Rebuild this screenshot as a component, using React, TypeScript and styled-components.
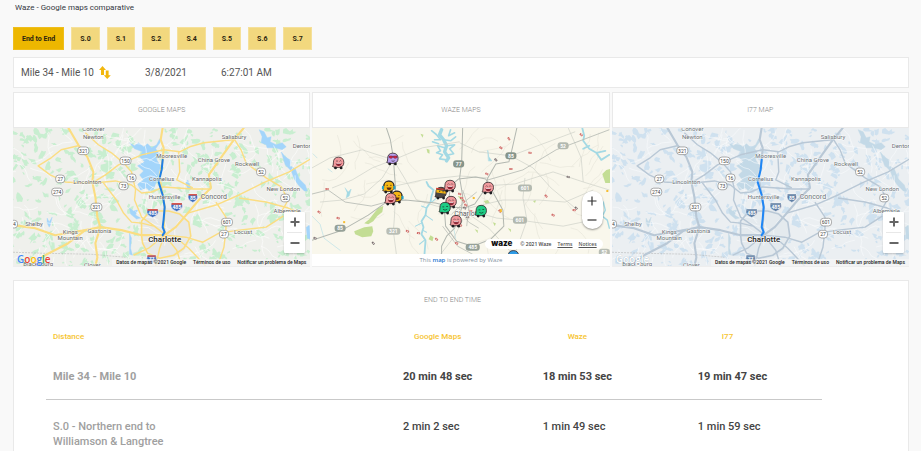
import React from 'react';
import styled, { createGlobalStyle, css } from 'styled-components';

const GlobalStyle = createGlobalStyle`
  * { box-sizing: border-box; }
  body {
    margin: 0;
    background: #f9f9f9;
    color: #444;
    font-family: Roboto, 'Liberation Sans', sans-serif;
  }
  button { font-family: inherit; cursor: pointer; }
`;

/* ---------- page layout ---------- */

const Page = styled.main`
  display: flex;
  flex-direction: column;
  min-height: 100vh;
  padding: 0 12px 0 13px;
`;

const PageTitle = styled.h1`
  margin: 0;
  padding: 2px 2px 0;
  height: 27px;
  font-size: 8px;
  line-height: 12px;
  font-weight: 400;
  color: #33383f;
`;

const Segments = styled.nav`
  display: flex;
  flex-wrap: wrap;
  gap: 7px;
  margin-bottom: 7px;
`;

const SegmentButton = styled.button<{ $active?: boolean }>`
  height: 23px;
  padding: 0 8px;
  border: 1px solid ${(p) => (p.$active ? '#efbe1c' : '#f5e09a')};
  background: ${(p) => (p.$active ? '#edb700' : '#f2d87e')};
  color: #2b2410;
  font-size: 7px;
  font-weight: 700;
`;

const panel = css`
  background: #fff;
  border: 1px solid #e9e9e9;
`;

const StatusBar = styled.section`
  ${panel}
  display: flex;
  align-items: center;
  height: 31px;
  margin: 0 0 4px;
  padding: 0 7px;
  font-size: 10px;
  color: #555;
`;

const Direction = styled.div`
  display: flex;
  align-items: center;
  gap: 5px;
  width: 124px;
`;

const SwapButton = styled.button`
  display: flex;
  padding: 0;
  border: 0;
  background: none;
`;

const DateCell = styled.time`
  width: 76px;
`;

const Maps = styled.section`
  display: grid;
  grid-template-columns: 1fr 1fr 1fr;
  gap: 2px;
`;

const MapCard = styled.article`
  display: flex;
  flex-direction: column;
  min-width: 0;
  border-bottom: 1px solid #eee;
`;

const MapHeading = styled.h2`
  ${panel}
  display: flex;
  align-items: center;
  justify-content: center;
  height: 36px;
  margin: 0;
  font-size: 7px;
  font-weight: 300;
  color: #888;
`;

const MapView = styled.div<{ $height: number }>`
  position: relative;
  overflow: hidden;
  height: ${(p) => p.$height}px;
  svg.canvas { display: block; width: 100%; height: 100%; }
`;

/* ---------- map overlays ---------- */

const ZoomBox = styled.div<{ $round?: boolean }>`
  position: absolute;
  right: ${(p) => (p.$round ? 7 : 5)}px;
  bottom: ${(p) => (p.$round ? 25 : 13)}px;
  display: flex;
  flex-direction: column;
  width: 21px;
  height: ${(p) => (p.$round ? 38 : 41)}px;
  padding: 0 ${(p) => (p.$round ? 0 : 3)}px;
  border-radius: ${(p) => (p.$round ? 11 : 1)}px;
  background: #fff;
  box-shadow: 0 1px 2px rgba(0, 0, 0, ${(p) => (p.$round ? 0.4 : 0.2)});
`;

const ZoomButton = styled.button<{ $divided?: boolean }>`
  flex: 1;
  display: flex;
  align-items: center;
  justify-content: center;
  padding: 0;
  border: 0;
  border-bottom: ${(p) => (p.$divided ? '1px solid #e8e8e8' : '0')};
  background: none;
`;

const GoogleMark = styled.a<{ $white?: boolean }>`
  position: absolute;
  left: 4px;
  bottom: 0;
  font: 600 10px/14px 'Open Sans', sans-serif;
  color: ${(p) => (p.$white ? '#fff' : '#4285f4')};
  text-shadow: 0 0 1px ${(p) => (p.$white ? '#8fa3b5' : '#fff')};
  text-decoration: none;
`;

const Tone = styled.span<{ $color?: string }>`
  color: ${(p) => p.$color || 'inherit'};
`;

const Credits = styled.div`
  position: absolute;
  right: 0;
  bottom: 0;
  display: flex;
  justify-content: flex-end;
  gap: 7px;
  padding: 0 4px;
  background: rgba(245, 245, 245, 0.75);
  font-size: 5px;
  line-height: 7px;
  font-weight: 500;
  color: #222;
  white-space: nowrap;
  a { color: inherit; text-decoration: none; }
`;

const WazeCredits = styled.div`
  position: absolute;
  right: 7px;
  bottom: 5px;
  display: flex;
  align-items: center;
  gap: 6px;
  height: 10px;
  padding: 0 6px;
  border-radius: 5px;
  background: #fff;
  font: 600 5px/10px 'Open Sans', sans-serif;
  color: #444;
  a { color: #555; }
`;

const WazeMark = styled.strong`
  font: 900 8px/8px Inter, sans-serif;
  color: #111;
  margin: 0 2px 2px 0;
`;

const PoweredBy = styled.p`
  margin: 0;
  height: 12px;
  background: #fff;
  font: 400 6px/12px 'Open Sans', sans-serif;
  text-align: center;
  color: #8494a3;
  a { color: #1f78d1; text-decoration: none; font-weight: 600; }
`;

/* ---------- times table ---------- */

const TimesPanel = styled.section`
  ${panel}
  flex: 1;
  margin: 13px 0 0;
  border-bottom: 0;
`;

const TimesHeading = styled.h2`
  margin: 0;
  padding-top: 13px;
  padding-right: 17px;
  font-size: 7px;
  line-height: 12px;
  font-weight: 300;
  text-align: center;
  color: #888;
`;

const TimesTable = styled.table`
  width: calc(100% - 118px);
  margin: 25px 0 0 32px;
  table-layout: fixed;
  border-collapse: collapse;
  text-align: left;
`;

const HeadCell = styled.th<{ $width?: number; $inset: number }>`
  width: ${(p) => (p.$width ? `${p.$width}%` : 'auto')};
  padding: 0 0 0 ${(p) => p.$inset}px;
  font-size: 8px;
  line-height: 12px;
  font-weight: 500;
  color: #f6c431;
`;

const Row = styled.tr<{ $total?: boolean }>`
  font-size: 11px;
  line-height: 15px;
  font-weight: ${(p) => (p.$total ? 700 : 500)};
  border-bottom: ${(p) => (p.$total ? '1px solid #c9c9c9' : '0')};
`;

const NameCell = styled.th`
  padding: 26px 220px 15px 7px;
  font-weight: inherit;
  color: #a0a0a0;
  vertical-align: top;
  ${Row}:last-child & { padding: 19px 220px 0 7px; }
`;

const TimeCell = styled.td`
  padding: 26px 0 15px;
  vertical-align: top;
  ${Row}:last-child & { padding: 19px 0 0; }
`;

/* ---------- map data ---------- */

type Pt = [number, number];

const line = (pts: Pt[]) => 'M' + pts.map((p) => p.join(',')).join('L');

function seeded(seed: number) {
  let s = seed;
  return () => {
    s = (s * 16807) % 2147483647;
    return s / 2147483647;
  };
}

function scatterPatches(seed: number, count: number) {
  const rnd = seeded(seed);
  let d = '';
  for (let i = 0; i < count; i++) {
    const cx = rnd() * 310 - 5;
    const cy = rnd() * 140;
    const size = 1.5 + rnd() * 4;
    const inCity = Math.hypot(cx - 152, cy - 104) < 26;
    const pts: Pt[] = [];
    const n = 9;
    const tilt = rnd() * 3;
    for (let k = 0; k < n; k++) {
      const a = (k / n) * Math.PI * 2;
      const r = size * (0.3 + rnd() * 0.9);
      const x = Math.cos(a) * r * 0.65;
      const y = Math.sin(a) * r * 1.2;
      pts.push([
        +(cx + x * Math.cos(tilt) - y * Math.sin(tilt)).toFixed(1),
        +(cy + x * Math.sin(tilt) + y * Math.cos(tilt)).toFixed(1),
      ]);
    }
    if (!inCity) d += line(pts) + 'Z';
  }
  return d;
}

function scatterStreets(seed: number, count: number, step: number) {
  const rnd = seeded(seed);
  let d = '';
  for (let i = 0; i < count; i++) {
    let x = rnd() * 300;
    let y = rnd() * 138;
    let a = rnd() * 6.28;
    const pts: Pt[] = [];
    for (let k = 0; k < 6; k++) {
      pts.push([+x.toFixed(1), +y.toFixed(1)]);
      a += (rnd() - 0.5) * 1.1;
      x += Math.cos(a) * step;
      y += Math.sin(a) * step;
    }
    d += line(pts);
  }
  return d;
}

const PATCHES = scatterPatches(77, 520);
const STREETS = scatterStreets(1234, 150, 5);
const LANES = scatterStreets(4321, 60, 7);

const HIGHWAYS = [
  'M55,0L65,17L74,29L80,44L79,54L82,69L84,89L87,99L82,115L84,129L82,138',
  'M72,5L85,17L98,25L110,35L118,44L122,62L121,72L128,89L138,96L151,106',
  'M65,18L48,22L38,30L25,38L37,47L52,54L67,55L79,55L92,47L105,37L112,34L128,27L150,22L166,24L176,19L190,15L219,12',
  'M80,55L102,53L118,57L128,65L138,64L150,59L164,60L180,61L197,61',
  'M90,55L103,72L110,85L118,94L128,95L140,98',
  'M0,97L22,100L42,107L72,102L87,99L108,102L128,107L151,107',
  'M72,102L55,115L32,127L15,138',
  'M149,0L147,12L150,20L149,32L146,50L149,67L151,79L150,99L151,107',
  'M151,107L162,99L174,85L185,72L197,60L195,47L209,27L220,12L230,0',
  'M220,11L227,22L232,35L252,50L267,59L274,72L267,84',
  'M165,24L166,44L163,52L179,60',
  'M174,85L202,77L225,67L249,55L275,44L298,30',
  'M225,70L252,74L274,80L284,84',
  'M202,74L212,89L212,102L210,119L205,134',
  'M151,107L172,109L189,114L205,105L225,102L252,99L269,88',
  'M162,109L175,120L192,138',
  'M151,107L163,122L168,138',
  'M151,107L146,120L142,138',
  'M151,107L135,120L120,127',
];
const MAJOR = [0, 5, 6, 7, 8];
const LOOP =
  'M128,107L128,93L134,86L142,83L155,83L166,86L175,94L177,108L170,120L160,127L146,130L134,125L129,115Z';

const LAKES = [
  'M116,15L121,18L125,15L130,19L134,16L138,20L143,17L146,11L147,14L142,21L146,26L143,32L147,38L145,46L143,53L140,61L136,63L133,60L127,62L124,56L130,52L126,47L130,43L124,38L131,34L126,29L129,24L121,21Z',
  'M245,2L250,4L253,10L257,9L256,14L262,17L268,15L272,19L268,22L261,20L253,20L252,17L247,15L248,9Z',
  'M267,24L271,29L277,33L276,38L281,41L285,51L291,57L293,63L290,63L284,57L280,51L277,43L271,37Z',
  'M34,90L36,94L39,89L37,97L36,99L34,95Z',
  'M116,80L120,83L124,82L122,87L127,90L123,91L117,86Z',
  'M116,105L118,110L117,120L119,127L116,126L116,114Z',
  'M172,55L174,52L177,60L174,61Z',
  'M292,99L295,97L296,111L293,110Z',
];

type Label = { t: string; x: number; y: number; s?: number; bold?: boolean };
const LABELS: Label[] = [
  { t: 'Conover', x: 80, y: 1 },
  { t: 'Newton', x: 80, y: 9 },
  { t: 'Lincolnton', x: 74, y: 54 },
  { t: 'Shelby', x: 21, y: 96 },
  { t: 'Kings', x: 57, y: 104 },
  { t: 'Mountain', x: 57, y: 110 },
  { t: 'Gastonia', x: 86, y: 103 },
  { t: 'Blacksburg', x: 25, y: 136 },
  { t: 'Clover', x: 79, y: 137 },
  { t: 'Mooresville', x: 158, y: 28 },
  { t: 'Cornelius', x: 148, y: 51 },
  { t: 'Huntersville', x: 151, y: 69 },
  { t: 'Salisbury', x: 220, y: 9 },
  { t: 'Denton', x: 288, y: 18 },
  { t: 'China Grove', x: 200, y: 32 },
  { t: 'Rockwell', x: 233, y: 36 },
  { t: 'Kannapolis', x: 193, y: 51 },
  { t: 'Concord', x: 200, y: 69, s: 7 },
  { t: 'New London', x: 269, y: 61 },
  { t: 'Albemarle', x: 273, y: 83 },
  { t: 'Locust', x: 229, y: 104 },
  { t: 'Charlotte', x: 151, y: 111, s: 8, bold: true },
];

const SHIELDS: [string, number, number][] = [
  ['321', 70, 23], ['150', 112, 33], ['27', 47, 51], ['16', 118, 50], ['73', 110, 58],
  ['274', 44, 64], ['321', 83, 79], ['74', 0, 96], ['52', 247, 44], ['52', 271, 70],
  ['601', 213, 94], ['27', 210, 106],
];

const INTERSTATES: [string, number, number][] = [
  ['485', 139, 85], ['85', 179, 70], ['485', 163, 79], ['77', 138, 131],
];

const MAP_THEMES = {
  street: {
    land: '#eff0ec', city: '#e6e7e6', patch: '#c8eed0', lane: '#ffffff', road: '#fbdd82',
    water: '#a3d5fb', text: '#666', crest: '#3f6fc0', crown: '#d8564c', route: '#1f7fe5',
  },
  steel: {
    land: '#ebeff2', city: '#e2e8ec', patch: '#cfe1ef', lane: '#fafcfd', road: '#b9c8d6',
    water: '#c3d9e7', text: '#6c7277', crest: '#5f7fa6', crown: '#7f98b4', route: '#1f86f5',
  },
};

function RoadMap({ theme, title }: { theme: keyof typeof MAP_THEMES; title: string }) {
  const c = MAP_THEMES[theme];
  return (
    <svg className="canvas" viewBox="0 0 296 138" preserveAspectRatio="xMidYMid slice" role="img" aria-label={title}>
      <rect x="-20" y="-20" width="340" height="180" fill={c.land} />
      <path d={PATCHES} fill={c.patch} />
      <circle cx="152" cy="105" r="25" fill={c.city} opacity="0.8" />
      {LAKES.map((d) => (
        <path key={d} d={d} fill={c.water} stroke={c.water} strokeWidth="0.4" strokeLinejoin="round" />
      ))}
      <path d={STREETS} fill="none" stroke={c.lane} strokeWidth="0.7" opacity="0.8" />
      <path d="M0,124L30,125L78,126L112,129" fill="none" stroke="#aaa" strokeWidth="0.5" strokeDasharray="2 1" />
      <g fill="none" stroke={c.road} strokeLinejoin="round">
        {HIGHWAYS.map((d, i) => (
          <path key={d} d={d} strokeWidth={MAJOR.includes(i) ? 2.1 : 1.4} />
        ))}
        <path d={LOOP} strokeWidth="1.6" />
      </g>
      <path
        d="M149,32L148,42L145,54L149,67L151,79L150,91L149,99L151,104L149,107"
        fill="none" stroke={c.route} strokeWidth="2" strokeLinejoin="round" strokeLinecap="round"
      />
      {SHIELDS.map(([t, x, y]) => (
        <g key={`${t}${x}${y}`}>
          <rect x={x - (t.length > 2 ? 5.5 : 4.5)} y={y - 3.8} width={t.length > 2 ? 11 : 9} height="7.6" rx="3" fill="#fff" stroke="#777" strokeWidth="0.6" />
          <text x={x} y={y + 1.8} fontSize="5" textAnchor="middle" fill="#444">{t}</text>
        </g>
      ))}
      {INTERSTATES.map(([t, x, y]) => {
        const h = t.length > 2 ? 5 : 4;
        return (
          <g key={`${t}${x}`}>
            <path d={`M${x - h},${y - 4}h${h * 2}l.8,3q0,3.4,${-h - 0.8},5.4q${-h - 0.8},-2,${-h - 0.8},-5.4z`} fill={c.crest} stroke="#fff" strokeWidth="0.5" />
            <path d={`M${x - h},${y - 4}h${h * 2}l.4,1.6h${-h * 2 - 0.8}z`} fill={c.crown} />
            <text x={x} y={y + 2.2} fontSize="5" fontWeight="700" textAnchor="middle" fill="#fff">{t}</text>
          </g>
        );
      })}
      <g textAnchor="middle" stroke="#fff" strokeWidth="1" strokeOpacity="0.8" paintOrder="stroke" strokeLinejoin="round">
        {LABELS.map((l) => (
          <text key={l.t} x={l.x} y={l.y + (l.s || 6) * 0.35} fontSize={l.s || 6} fontWeight={l.bold ? 500 : 400} fill={l.bold ? '#222' : c.text}>
            {l.t}
          </text>
        ))}
      </g>
    </svg>
  );
}

type Mood = 'laugh' | 'cool' | 'headphones' | 'ninja' | 'calm';
const WAZERS: { x: number; y: number; color: string; mood: Mood }[] = [
  { x: 26, y: 35, color: '#f19a9d', mood: 'laugh' },
  { x: 80, y: 31, color: '#b9a0ee', mood: 'cool' },
  { x: 76, y: 59, color: '#f5b614', mood: 'headphones' },
  { x: 84, y: 69, color: '#f5b614', mood: 'headphones' },
  { x: 78, y: 71, color: '#f19a9d', mood: 'laugh' },
  { x: 128, y: 65, color: '#4a4744', mood: 'ninja' },
  { x: 137, y: 58, color: '#f19a9d', mood: 'laugh' },
  { x: 138, y: 74, color: '#f19a9d', mood: 'laugh' },
  { x: 132, y: 80, color: '#1fce86', mood: 'calm' },
  { x: 143, y: 93, color: '#f19a9d', mood: 'laugh' },
  { x: 175, y: 60, color: '#f19a9d', mood: 'laugh' },
  { x: 168, y: 83, color: '#1fce86', mood: 'calm' },
  { x: 200, y: 128, color: '#2e9be6', mood: 'calm' },
];

function Wazer({ x, y, color, mood }: (typeof WAZERS)[number]) {
  return (
    <g transform={`translate(${x} ${y})`}>
      <path d="M-5.6,3.6Q-4.6,2.6,-4.7,0Q-4.8,-5.6,0.4,-5.7Q5.6,-5.6,5.7,-0.4Q5.6,4.4,0.6,4.6Q-3.6,5,-5.6,3.6Z" fill={color} stroke="#33272a" strokeWidth="0.8" />
      <circle cx="-2.6" cy="5" r="1.4" fill="#1d1d20" />
      <circle cx="3" cy="5" r="1.4" fill="#1d1d20" />
      {mood === 'laugh' && (
        <>
          <path d="M-2.4,.2h5.8q-.3,3,-2.9,3q-2.6,0,-2.9,-3z" fill="#8a2433" />
          <path d="M-1.8,.5h4.6" stroke="#fff" strokeWidth="0.7" />
          <path d="M-2,-1.4l.9,-.9l.9,.9M1.4,-1.4l.9,-.9l.9,.9" fill="none" stroke="#33272a" strokeWidth="0.6" />
        </>
      )}
      {mood === 'cool' && (
        <>
          <path d="M-3.2,-2.8h3.4v1.2q0,1,-1.6,1q-1.8,0,-1.8,-1.2zM1,-2.8h3.6v1.2q0,1,-1.7,1q-1.9,0,-1.9,-1.2z" fill="#d92c4a" stroke="#5a1030" strokeWidth="0.5" />
          <path d="M-.8,2q1.6,1,3,-.2" fill="none" stroke="#33272a" strokeWidth="0.7" />
        </>
      )}
      {mood === 'headphones' && (
        <>
          <path d="M-4.4,-1q0,-5,5,-5t5,5" fill="none" stroke="#222" strokeWidth="0.9" />
          <rect x="-6.4" y="-1.2" width="2.2" height="3.6" rx="1" fill="#2a9fc4" />
          <rect x="5" y="-1.2" width="2.2" height="3.6" rx="1" fill="#2a9fc4" />
          <path d="M-1.8,.4h5q-.3,2.6,-2.5,2.6t-2.5,-2.6z" fill="#5b2a12" />
          <path d="M-1.8,-1.6h1.4M1.8,-1.6h1.4" stroke="#33272a" strokeWidth="0.7" />
        </>
      )}
      {mood === 'ninja' && (
        <>
          <path d="M-4.2,-3.4L5,-1.6L5.2,.8L-4.2,-.6z" fill="#f5b614" />
          <path d="M-4.4,-4.6L4.6,-3.4" stroke="#d33b32" strokeWidth="1.2" />
          <path d="M-1.4,-1.8h1M2,-1.2h1" stroke="#222" strokeWidth="1" />
        </>
      )}
      {mood === 'calm' && (
        <>
          <path d="M-2.2,-1.2h1.8M1.6,-1.6h1.8" stroke="#123b2a" strokeWidth="0.7" />
          <path d="M-1.6,1.2q2,1.8,4.2,0" fill="none" stroke="#123b2a" strokeWidth="0.7" />
        </>
      )}
    </g>
  );
}

const BADGES: [string, number, number, string][] = [
  ['77', 146, 36, '#87958b'], ['85', 198, 28, '#87958b'], ['52', 250, 18, '#b3b9b0'],
  ['601', 212, 60, '#b3b9b0'], ['601', 207, 92, '#b3b9b0'], ['485', 160, 119, '#96a198'],
  ['85', 28, 100, '#96a198'], ['321', 81, 103, '#b9beb5'], ['52', 291, 124, '#b9beb5'],
];

const REPORTS: Pt[] = [
  [15, 61], [7, 84], [26, 90], [61, 115], [95, 103], [106, 105], [124, 111], [3, 110],
  [196, 11], [188, 20], [217, 25], [183, 32], [174, 46], [198, 41], [268, 7], [255, 49],
  [233, 68], [240, 87], [261, 82], [263, 80], [147, 66], [151, 73], [153, 77], [155, 89],
  [187, 83], [144, 115], [149, 70], [152, 80], [158, 83], [148, 97],
];

function WazeMap() {
  return (
    <svg className="canvas" viewBox="0 0 296 126" preserveAspectRatio="xMidYMid slice" role="img" aria-label="Waze live map">
      <rect x="-20" y="-20" width="340" height="180" fill="#f9f7ec" />
      <path d={LANES} fill="none" stroke="#e6e5d9" strokeWidth="0.6" />
      <g fill="#c3dd94">
        <path d="M42,103L52,99L60,98L61,103L59,108L50,109L43,106Z" />
        <path d="M52,95L57,91L61,86L66,80L71,78L70,84L65,88L61,93L56,96Z" />
        <path d="M114,21l3,1v4l-2,-1z" />
        <path d="M289,46l4,-4l4,-1v14l-5,0z" />
        <path d="M134,52l2,1l2,4l-4,-1zM171,73l4,-1l2,3l-4,1zM118,107l3,2l-1,4l-4,-2zM220,73l3,-1l-1,3z" />
        <path d="M180,94l3,1l-1,3zM162,101l3,1v3zM195,100l3,1v3zM108,6l3,1l-1,3zM145,68l5,1l-1,4z" />
      </g>
      <g fill="none" stroke="#a3d9e4" strokeLinejoin="round" strokeLinecap="round">
        <path d="M129,2L127,7L131,12L134,18L132,24L136,30L134,33" strokeWidth="3.4" />
        <path d="M119,3L124,7L128,12L122,12M138,2L136,8L142,5M131,12L138,13L143,9M134,18L142,17L137,21L141,26L136,27M132,20L125,18L128,23L124,25L130,27L127,31L134,32M126,16L120,14" strokeWidth="1.6" />
        <path d="M114,54L116,58L121,62L119,68L118,74L114,80L113,87L109,93L111,99L109,106L113,112L112,126" strokeWidth="1.8" />
        <path d="M119,74L124,70M113,87L120,92M109,95L103,98M112,112L107,116M110,102L114,104M114,80L109,78" strokeWidth="1" />
        <path d="M33,60L36,64L39,61L37,68L34,70L35,65Z" fill="#a3d9e4" strokeWidth="0.4" />
        <path d="M175,23l1,6l3,4l-3,0z" fill="#a3d9e4" strokeWidth="0.6" />
        <path d="M269,0L271,8L270,13L276,21L283,25L288,32L296,27M283,25L292,23M276,18L270,21" strokeWidth="1.8" />
        <path d="M290,74L292,82L289,88L294,92L296,100" strokeWidth="1.4" />
        <path d="M0,88L8,96L12,110L20,116L28,122M1,26l4,4M16,41l4,3M141,100l2,10" strokeWidth="0.5" />
      </g>
      <g fill="none" stroke="#ced1c9" strokeWidth="0.7">
        <path d="M20,60L40,52L60,40L81,32L110,20L147,14" />
        <path d="M83,69L82,90L81,103L84,126M81,32L92,50L104,72L124,78L140,80" />
        <path d="M0,40L18,30L50,22L81,32M81,32L70,50L52,66L30,72L8,74M83,58L110,52L147,48L175,50" />
        <path d="M172,58L202,56L240,44L270,54L296,62M270,54L268,30L255,0" />
        <path d="M156,80L190,72L226,72L252,74L280,62M156,82L184,90L207,92L250,98L288,90" />
        <path d="M212,50L210,70L214,92L202,126M153,84L176,100L200,126M198,28L220,40L238,60L262,80" />
        <path d="M147,15L166,24L198,28L230,16L262,4M128,126L142,108L150,92" />
      </g>
      <g fill="none" stroke="#b3b8b1" strokeWidth="1" strokeLinejoin="round">
        <path d="M0,66L16,62L33,74L59,78L74,74M175,52L210,42L243,22L296,2" strokeWidth="0.8" />
        <path d="M74,0L78,12L81,30L83,58L83,69" />
        <path d="M0,112L30,102L56,87L74,74L93,72L123,75L139,79L152,80L162,76L173,60L175,50L183,36L196,34L199,22L204,0" />
        <path d="M150,0L149,34L147,50L150,68L149,80L142,100L134,108L129,118L129,126" />
        <path d="M136,72L138,58L146,51L163,49L173,51L180,64L190,82L191,98L178,111L160,118L144,113L133,98L132,84Z" />
        <path d="M130,98L145,118L160,126M146,80L156,94L166,100M139,86L154,72L164,64M150,62L156,80L154,98" strokeWidth="0.7" />
      </g>
      {REPORTS.map(([x, y], i) => (
        <g key={i} transform={`translate(${x} ${y}) rotate(${(i * 37) % 60})`}>
          <rect x="-1.6" y="-1" width="3.2" height="2" rx="0.4" fill={i % 4 === 3 ? '#776f70' : '#cf6663'} />
          <rect x="-0.4" y="-0.5" width="1.1" height="1" fill="#f6e6e0" />
        </g>
      ))}
      <g fill="#f6bd31">
        <rect x="31" y="93" width="2" height="2" />
        <rect x="160" y="69" width="2" height="2" />
        <rect x="187" y="81" width="2" height="3" />
        <rect x="293" y="62" width="2" height="2" />
      </g>
      {BADGES.map(([t, x, y, fill]) => {
        const w = t.length > 2 ? 14 : 11;
        return (
          <g key={`${t}${x}`}>
            <rect x={x - w / 2} y={y - 3.5} width={w} height="7" rx="3" fill={fill} />
            <text x={x} y={y + 1.9} fontSize="5" fontWeight="700" textAnchor="middle" fill="#fff">{t}</text>
          </g>
        );
      })}
      <text x="156" y="88" fontSize="7" textAnchor="middle" fill="#5c5c5c" stroke="#fff" strokeWidth="0.8" paintOrder="stroke">Charlotte</text>
      {WAZERS.map((w) => (
        <Wazer key={`${w.x}-${w.y}`} {...w} />
      ))}
    </svg>
  );
}

/* ---------- small parts ---------- */

function ZoomControls({ round }: { round?: boolean }) {
  const stroke = round ? 1.2 : 2;
  return (
    <ZoomBox $round={round}>
      <ZoomButton $divided={!round} aria-label="Zoom in">
        <svg width="10" height="10" viewBox="0 0 10 10" stroke={round ? '#333' : '#666'} strokeWidth={stroke}>
          <path d="M0.5,5h9M5,0.5v9" />
        </svg>
      </ZoomButton>
      <ZoomButton aria-label="Zoom out">
        <svg width="10" height="10" viewBox="0 0 10 10" stroke={round ? '#333' : '#666'} strokeWidth={stroke}>
          <path d="M0.5,5h9" />
        </svg>
      </ZoomButton>
    </ZoomBox>
  );
}

function GoogleOverlay({ white }: { white?: boolean }) {
  const tones = ['#4285f4', '#ea4335', '#fbbc05', '#4285f4', '#34a853', '#ea4335'];
  return (
    <>
      <GoogleMark href="#google" $white={white}>
        {'Google'.split('').map((ch, i) => (
          <Tone key={i} $color={white ? undefined : tones[i]}>{ch}</Tone>
        ))}
      </GoogleMark>
      <ZoomControls />
      <Credits>
        <span>Datos de mapas ©2021 Google</span>
        <a href="#terms">Términos de uso</a>
        <a href="#report">Notificar un problema de Maps</a>
      </Credits>
    </>
  );
}

const SEGMENTS = ['End to End', 'S.0', 'S.1', 'S.2', 'S.4', 'S.5', 'S.6', 'S.7'];

const COLUMNS = [
  { label: 'Distance', width: 46, inset: 7 },
  { label: 'Google Maps', width: 18, inset: 11 },
  { label: 'Waze', width: 20, inset: 25 },
  { label: 'I77', inset: 24 },
];

const ROWS = [
  { name: 'Mile 34 - Mile 10', times: ['20 min 48 sec', '18 min 53 sec', '19 min 47 sec'] },
  { name: 'S.0 - Northern end to Williamson & Langtree', times: ['2 min 2 sec', '1 min 49 sec', '1 min 59 sec'] },
];

export default function App() {
  return (
    <>
      <GlobalStyle />
      <Page>
        <PageTitle>Waze - Google maps comparative</PageTitle>
        <Segments aria-label="Segments">
          {SEGMENTS.map((s, i) => (
            <SegmentButton key={s} $active={i === 0}>{s}</SegmentButton>
          ))}
        </Segments>
        <StatusBar>
          <Direction>
            <span>Mile 34 - Mile 10</span>
            <SwapButton aria-label="Swap direction">
              <svg width="12" height="13" viewBox="0 0 12 13" fill="#f2b70d">
                <path d="M3.5,0L7,4H5v5H2V4H0z" />
                <path d="M8.2,13L4.8,9.2H6.8V4.6H9.6V9.2H11.8z" />
              </svg>
            </SwapButton>
          </Direction>
          <DateCell>3/8/2021</DateCell>
          <time>6:27:01 AM</time>
        </StatusBar>
        <Maps>
          <MapCard>
            <MapHeading>GOOGLE MAPS</MapHeading>
            <MapView $height={138}>
              <RoadMap theme="street" title="Google map" />
              <GoogleOverlay />
            </MapView>
          </MapCard>
          <MapCard>
            <MapHeading>WAZE MAPS</MapHeading>
            <MapView $height={126}>
              <WazeMap />
              <WazeCredits>
                <WazeMark>waze</WazeMark>
                <span>© 2021 Waze</span>
                <a href="#waze-terms">Terms</a>
                <a href="#waze-notices">Notices</a>
              </WazeCredits>
              <ZoomControls round />
            </MapView>
            <PoweredBy>
              This <a href="#live-map">map</a> is powered by Waze
            </PoweredBy>
          </MapCard>
          <MapCard>
            <MapHeading>I77 MAP</MapHeading>
            <MapView $height={138}>
              <RoadMap theme="steel" title="I77 map" />
              <GoogleOverlay white />
            </MapView>
          </MapCard>
        </Maps>
        <TimesPanel>
          <TimesHeading>END TO END TIME</TimesHeading>
          <TimesTable>
            <thead>
              <tr>
                {COLUMNS.map((c) => (
                  <HeadCell key={c.label} scope="col" $width={c.width} $inset={c.inset}>{c.label}</HeadCell>
                ))}
              </tr>
            </thead>
            <tbody>
              {ROWS.map((r, i) => (
                <Row key={r.name} $total={i === 0}>
                  <NameCell scope="row">{r.name}</NameCell>
                  {r.times.map((t) => (
                    <TimeCell key={t}>{t}</TimeCell>
                  ))}
                </Row>
              ))}
            </tbody>
          </TimesTable>
        </TimesPanel>
      </Page>
    </>
  );
}
